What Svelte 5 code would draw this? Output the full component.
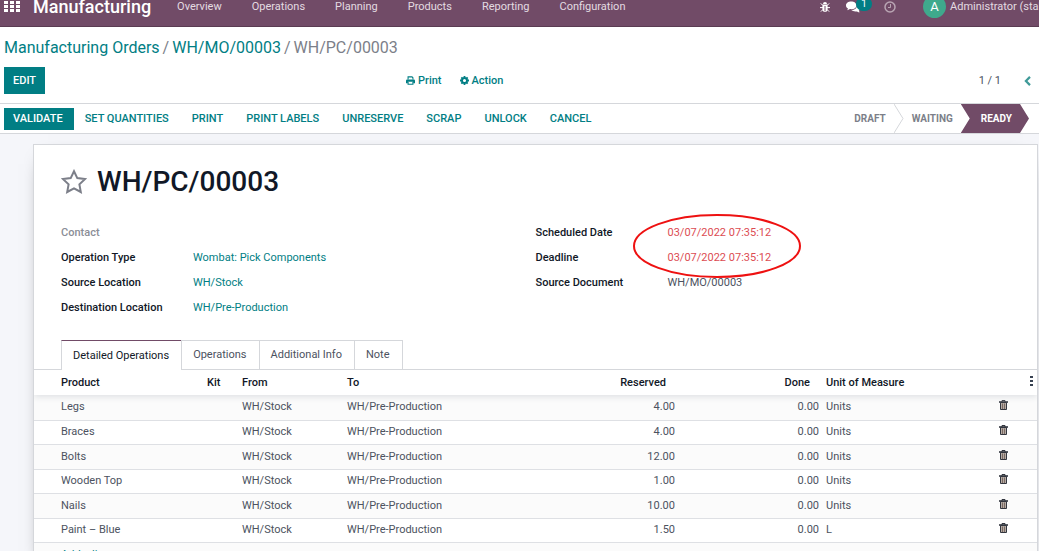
<script>
  const menus = ["Overview", "Operations", "Planning", "Products", "Reporting", "Configuration"];
  const actions = ["Set quantities", "Print", "Print labels", "Unreserve", "Scrap", "Unlock", "Cancel"];
  const tabs = ["Detailed Operations", "Operations", "Additional Info", "Note"];

  let activeTab = $state("Detailed Operations");

  let lines = $state([
    { product: "Legs", reserved: 4, done: 0, uom: "Units" },
    { product: "Braces", reserved: 4, done: 0, uom: "Units" },
    { product: "Bolts", reserved: 12, done: 0, uom: "Units" },
    { product: "Wooden Top", reserved: 1, done: 0, uom: "Units" },
    { product: "Nails", reserved: 10, done: 0, uom: "Units" },
    { product: "Paint – Blue", reserved: 1.5, done: 0, uom: "L" },
  ]);

  const removeLine = (line) => {
    lines = lines.filter((l) => l !== line);
  };
</script>

<div class="client">
  <header class="navbar">
    <button class="apps" aria-label="Apps">
      <svg width="16" height="12" viewBox="0 0 16 12">
        {#each [0, 4, 8] as y}
          {#each [0, 6, 12] as x}
            <rect {x} {y} width="4" height="3" fill="#fff" />
          {/each}
        {/each}
      </svg>
    </button>
    <a class="brand" href="#home">Manufacturing</a>
    <nav>
      {#each menus as menu}
        <a href="#menu">{menu}</a>
      {/each}
    </nav>
    <div class="systray">
      <button class="bug" aria-label="Debug">
        <svg width="10" height="12" viewBox="0 0 10 12" fill="#fff" stroke="#fff">
          <path d="M3 3a2 2 0 0 1 4 0z" stroke="none" />
          <path d="M2.4 3.6h5.2v4.6c0 1.6-1 2.6-2.6 2.6s-2.6-1-2.6-2.6z" stroke="none" />
          <path d="M0 6.6h10M.8 2.4l2 2M9.2 2.4l-2 2M.9 10.6l2-2M9.1 10.6l-2-2" fill="none" />
          <path d="M5 5v5" stroke="#714b67" />
        </svg>
      </button>
      <button class="chat" aria-label="Conversations">
        <svg width="14" height="12" viewBox="0 0 14 12" fill="#fff">
          <path d="M10.8 4.2C13 4.8 14 6 14 7.400c0 .9-.5 1.600-1.200 2.200.2.800.6 1.200 1 1.700-1.200 0-2-.4-2.700-.9-2.300.4-4.700-.1-5.700-1.300 3.300 0 5.800-2 5.400-4.900z" />
          <path d="M5.200.6c2.900 0 5.200 1.600 5.200 3.800S8.100 8.200 5.200 8.200c-.5 0-.9 0-1.300-.1-.8.700-1.800 1.100-3 1.100.6-.5 1-1 1.100-1.700C.7 6.700 0 5.600 0 4.400 0 2.200 2.300.6 5.200.6z" />
        </svg>
        <span class="badge">1</span>
      </button>
      <button class="clock" aria-label="Activities">
        <svg width="12" height="12" viewBox="0 0 12 12" fill="none" stroke="#b9a5b3">
          <circle cx="6" cy="6" r="5" stroke-width="1.500" />
          <path d="M6.500 3v3.500H4" />
        </svg>
      </button>
      <button class="user"><span class="avatar">A</span>Administrator (stable)</button>
    </div>
  </header>

  <section class="control-panel">
    <div class="breadcrumb">
      <a href="#orders">Manufacturing Orders</a>
      <span>/</span>
      <a href="#mo">WH/MO/00003</a>
      <span>/</span>
      <span>WH/PC/00003</span>
    </div>
    <div class="cp-bottom">
      <div><button class="primary edit">EDIT</button></div>
      <div class="cp-actions">
        <button>
          <svg width="9" height="9" viewBox="0 0 10 10" fill="none" stroke="currentColor" stroke-width="1.200">
            <path d="M2.300 4V1h4.400l1 1v2" />
            <path d="M0 8V5.200Q0 4 1.200 4h7.600Q10 4 10 5.200V8H8V6.500H2V8z" fill="currentColor" stroke="none" />
            <path d="M2.300 6.500v2.700h5.400V6.500" />
          </svg>
          Print
        </button>
        <button>
          <svg width="9" height="9" viewBox="0 0 10 10" fill="none" stroke="currentColor">
            <circle cx="5" cy="5" r="2.800" stroke-width="2.200" />
            <path d="M5 0v1.500M5 8.500V10M0 5h1.500M8.500 5H10M1.500 1.500l1 1M7.500 7.500l1 1M8.500 1.500l-1 1M2.500 7.500l-1 1" stroke-width="2" />
          </svg>
          Action
        </button>
      </div>
      <div class="pager">
        <span>1 / 1</span>
        <button aria-label="Previous">
          <svg width="7" height="10" viewBox="0 0 7 10" fill="none" stroke="#3f9a98" stroke-width="2.200">
            <path d="M6 .9L1.900 5 6 9.100" />
          </svg>
        </button>
      </div>
    </div>
  </section>

  <section class="statusbar">
    <div class="buttons">
      <button class="primary">VALIDATE</button>
      {#each actions as action}
        <button>{action.toUpperCase()}</button>
      {/each}
    </div>
    <div class="states">
      <button>DRAFT</button>
      <svg width="10" height="29" viewBox="0 0 10 29" fill="none" stroke="#d5d7db">
        <path d="M0 0l9 14.500-9 14.500" />
      </svg>
      <button>WAITING</button>
      <button class="current">READY</button>
    </div>
  </section>

  <main>
    <div class="sheet">
      <div class="title">
        <button aria-label="Priority">
          <svg width="26" height="26" viewBox="0 0 26 26" fill="none" stroke="#7c7f89" stroke-width="2">
            <path d="M13 2.200l3.300 6.900 7.600 1-5.500 5.300 1.400 7.600-6.800-3.700-6.800 3.700 1.400-7.600-5.500-5.300 7.600-1z" />
          </svg>
        </button>
        <h1>WH/PC/00003</h1>
      </div>

      <div class="groups">
        <dl>
          <dt class="muted">Contact</dt>
          <dd></dd>
          <dt>Operation Type</dt>
          <dd><a href="#type">Wombat: Pick Components</a></dd>
          <dt>Source Location</dt>
          <dd><a href="#source">WH/Stock</a></dd>
          <dt>Destination Location</dt>
          <dd><a href="#destination">WH/Pre-Production</a></dd>
        </dl>
        <dl>
          <dt>Scheduled Date</dt>
          <dd class="late">03/07/2022 07:35:12</dd>
          <dt>Deadline</dt>
          <dd class="late">03/07/2022 07:35:12</dd>
          <dt>Source Document</dt>
          <dd>WH/MO/00003</dd>
          <svg class="marker" width="170" height="66" viewBox="0 0 170 66" fill="none" stroke="#ee1111" stroke-width="2">
            <ellipse cx="85" cy="33" rx="83" ry="31" />
          </svg>
        </dl>
      </div>

      <div class="tabs" role="tablist">
        {#each tabs as tab}
          <button role="tab" aria-selected={tab === activeTab} class:active={tab === activeTab} onclick={() => (activeTab = tab)}>
            {tab}
          </button>
        {/each}
      </div>

      <table>
        <colgroup>
          <col class="c-product" />
          <col class="c-kit" />
          <col class="c-from" />
          <col class="c-to" />
          <col class="c-reserved" />
          <col class="c-done" />
          <col />
          <col class="c-trash" />
          <col class="c-more" />
        </colgroup>
        <thead>
          <tr>
            <th>Product</th>
            <th>Kit</th>
            <th>From</th>
            <th>To</th>
            <th class="num">Reserved</th>
            <th class="num">Done</th>
            <th>Unit of Measure</th>
            <th></th>
            <th>
              <button aria-label="Optional columns">
                <svg width="3" height="10" viewBox="0 0 3 10" fill="#374151">
                  <path d="M0 0h3v2H0zM0 4h3v2H0zM0 8h3v2H0z" />
                </svg>
              </button>
            </th>
          </tr>
        </thead>
        <tbody>
          {#each lines as line}
            <tr>
              <td>{line.product}</td>
              <td></td>
              <td>WH/Stock</td>
              <td>WH/Pre-Production</td>
              <td class="num">{line.reserved.toFixed(2)}</td>
              <td class="num">{line.done.toFixed(2)}</td>
              <td>{line.uom}</td>
              <td>
                <button aria-label="Delete row" onclick={() => removeLine(line)}>
                  <svg width="9" height="10" viewBox="0 0 9 10" fill="none" stroke="#33363f">
                    <path d="M1.500 2.500v7h6v-7z" fill="#b5aca6" />
                    <path d="M3.500 3.500V9M5.500 3.500V9" stroke="#7b6a62" />
                    <path d="M0 2h9" stroke-width="1.600" />
                    <path d="M3 2V.5h3V2" />
                  </svg>
                </button>
              </td>
              <td></td>
            </tr>
          {/each}
          <tr>
            <td colspan="9"><a href="#add">Add a line</a></td>
          </tr>
        </tbody>
      </table>
    </div>
  </main>
</div>

<style>
  :global(body) {
    margin: 0;
  }
  .client {
    height: 100vh;
    overflow: hidden;
    display: flex;
    flex-direction: column;
    background: #f5f6fa;
    color: #4c5260;
    font: 11px/16px Roboto, sans-serif;
  }
  button {
    padding: 0;
    border: 0;
    background: none;
    color: inherit;
    font: inherit;
    white-space: nowrap;
    cursor: pointer;
  }
  svg {
    display: block;
    flex: none;
  }
  a {
    color: #017e84;
    text-decoration: none;
  }

  /* top bar, tucked under the window edge */
  .navbar {
    flex: none;
    box-sizing: border-box;
    height: 40px;
    margin-top: -13px;
    padding-left: 4px;
    display: flex;
    align-items: center;
    background: #714b67;
    border-bottom: 1px solid #5a3c52;
    color: #e3dbe1;
  }
  .navbar a {
    color: inherit;
  }
  .navbar .brand {
    margin-left: 13px;
    color: #fff;
    font-size: 18px;
    font-weight: 500;
  }
  nav {
    display: flex;
    gap: 30px;
    margin-left: 26px;
  }
  .systray {
    display: flex;
    align-items: center;
    margin-left: auto;
  }
  .chat {
    position: relative;
    margin-left: 16px;
  }
  .badge {
    position: absolute;
    left: 10px;
    bottom: 2px;
    width: 16px;
    border-radius: 8px;
    background: #017e84;
    color: #fff;
    font-size: 10px;
    line-height: 14px;
  }
  .clock {
    margin-left: 24px;
  }
  .user {
    display: flex;
    align-items: center;
    gap: 4px;
    width: 116px;
    margin-left: 27px;
    overflow: hidden;
  }
  .avatar {
    flex: none;
    width: 23px;
    border-radius: 50%;
    background: #3fa98c;
    color: #fff;
    font-size: 13px;
    line-height: 23px;
  }

  .control-panel {
    flex: none;
    padding: 11px 8px 9px 4px;
    background: #fff;
    border-bottom: 1px solid #d5d7db;
  }
  .breadcrumb {
    display: flex;
    gap: 3px;
    margin-bottom: 9px;
    color: #7c7f89;
    font-size: 16px;
    line-height: 20px;
  }
  .cp-bottom {
    display: grid;
    grid-template-columns: 402px auto 1fr;
    align-items: center;
  }
  .primary,
  .buttons .primary {
    padding: 0 9px;
    background: #017e84;
    color: #fff;
    font-weight: 500;
  }
  .edit {
    line-height: 27px;
  }
  .cp-actions {
    display: flex;
    gap: 18px;
    color: #017e84;
    font-weight: 500;
  }
  .cp-actions button {
    display: flex;
    align-items: center;
    gap: 3px;
  }
  .pager {
    display: flex;
    align-items: center;
    justify-content: flex-end;
    gap: 23px;
  }

  .statusbar {
    flex: none;
    display: flex;
    justify-content: space-between;
    padding: 0 10px 0 4px;
    background: #fff;
    border-bottom: 1px solid #d5d7db;
  }
  .buttons {
    display: flex;
    align-items: center;
  }
  .buttons button {
    padding: 0 12px 0 11px;
    color: #017e84;
    font-weight: 500;
    line-height: 22px;
  }
  .buttons .primary {
    padding: 0 11px 0 9px;
  }
  .states {
    display: flex;
    color: #7c7f89;
    font-size: 10px;
    font-weight: 700;
    line-height: 29px;
  }
  .states button {
    padding: 0 8px;
  }
  .states .current {
    padding: 0 17px 0 20px;
    background: #714b67;
    color: #fff;
    clip-path: polygon(0 0, calc(100% - 9px) 0, 100% 50%, calc(100% - 9px) 100%, 0 100%, 9px 50%);
  }

  main {
    flex: 1;
    padding: 10px 1px 0 33px;
  }
  .sheet {
    background: #fff;
    border: 1px solid #d5d7db;
    box-shadow: 0 5px 20px -15px #000;
  }
  .title {
    display: flex;
    align-items: center;
    gap: 10px;
    padding: 20px 27px 0;
  }
  h1 {
    margin: 0;
    color: #111827;
    font-size: 28px;
    font-weight: 500;
    line-height: 34px;
  }
  .groups {
    display: grid;
    grid-template-columns: 1fr 1fr;
    padding: 21px 27px 20px;
  }
  dl {
    position: relative;
    display: grid;
    grid-template-columns: 132px 1fr;
    grid-auto-rows: 25px;
    align-content: start;
    margin: 0;
    line-height: 25px;
  }
  dt {
    color: #111827;
    font-weight: 500;
  }
  dt.muted {
    color: #8b8e97;
  }
  dd {
    margin: 0;
  }
  .late {
    color: #dc4c52;
  }
  .marker {
    position: absolute;
    left: 96px;
    top: -7px;
  }

  .tabs {
    display: flex;
    padding: 0 27px;
    border-bottom: 1px solid #d5d7db;
  }
  .tabs button {
    padding: 0 12px 0 11px;
    border: 1px solid #d5d7db;
    border-right-width: 0;
    border-bottom-width: 0;
    line-height: 28px;
  }
  .tabs button:last-child {
    border-right-width: 1px;
  }
  .tabs .active {
    margin-bottom: -1px;
    border-top-color: #714b67;
    background: #fff;
    color: #111827;
  }

  table {
    width: 100%;
    table-layout: fixed;
    border-collapse: collapse;
  }
  .c-product {
    width: 170px;
  }
  .c-kit {
    width: 35px;
  }
  .c-from {
    width: 105px;
  }
  .c-to {
    width: 186px;
  }
  .c-reserved {
    width: 149px;
  }
  .c-done {
    width: 144px;
  }
  .c-trash {
    width: 31px;
  }
  .c-more {
    width: 10px;
  }
  th,
  td {
    height: 24px;
    padding: 0 4px 0 3px;
    text-align: left;
    box-sizing: border-box;
  }
  th {
    height: 25px;
    color: #111827;
    font-weight: 500;
  }
  thead {
    position: relative;
    box-shadow: 0 2px 6px #dfe1e4;
    clip-path: inset(0 0 -12px);
  }
  th:first-child,
  td:first-child {
    padding-left: 27px;
  }
  .num {
    text-align: right;
  }
  th.num {
    padding-right: 13px;
  }
  tbody tr {
    border-bottom: 1px solid #dee0e4;
  }
  tbody tr:nth-child(odd) {
    background: #fbfbfb;
  }
  tbody tr:nth-child(odd) td {
    height: 25px;
  }
</style>
